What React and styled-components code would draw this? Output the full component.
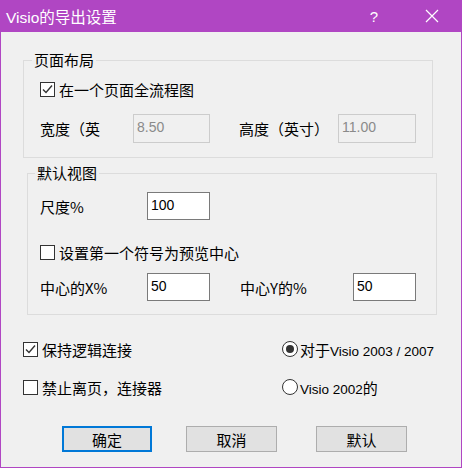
import React from 'react';
import styled, { createGlobalStyle } from 'styled-components';

const accent = '#b046c3';
const face = '#f0f0f0';

const GlobalStyle = createGlobalStyle`
  body {
    margin: 0;
    background: ${face};
    font-family: "Liberation Sans", "Noto Sans CJK SC", sans-serif;
  }
`;

const Dialog = styled.div`
  width: 462px;
  height: 468px;
  box-sizing: border-box;
  background: ${face};
  border: 1px solid ${accent};
  border-top: none;
  display: flex;
  flex-direction: column;
  color: #000;
  font-size: 15px;
`;

const TitleBar = styled.div`
  height: 32px;
  margin: 0 -1px;
  background: ${accent};
  color: #fff;
  display: flex;
  align-items: center;
  padding-left: 6px;
  font-size: 15.5px;
`;

const Title = styled.div`
  flex: 1;
`;

const TitleButton = styled.div`
  width: ${(p) => p.$w}px;
  display: flex;
  justify-content: center;
  align-items: center;
  font-size: 15px;
`;

const Group = styled.div`
  margin: ${(p) => p.$mt}px 0 0 ${(p) => p.$ml}px;
  width: 410px;
  box-sizing: border-box;
  border: 1px solid #dcdcdc;
  padding: 0 0 ${(p) => p.$pb}px ${(p) => p.$pl}px;
  display: flex;
  flex-direction: column;
`;

const Legend = styled.div`
  margin: -10px 0 0 ${(p) => p.$ml - p.$pl}px;
  padding: 0 2px;
  width: fit-content;
  background: ${face};
  line-height: 18px;
  font-family: "Noto Sans CJK SC", sans-serif;
`;

const Row = styled.div`
  display: flex;
  align-items: center;
  margin-top: ${(p) => p.$mt}px;
`;

const Label = styled.div`
  width: ${(p) => p.$w}px;
  margin-left: ${(p) => p.$ml || 0}px;
  font-family: "Noto Sans CJK SC", sans-serif;
  font-size: 15px;
`;

const Input = styled.div`
  width: ${(p) => p.$w}px;
  height: ${(p) => p.$h}px;
  box-sizing: border-box;
  border: 1px solid ${(p) => (p.$disabled ? '#cccccc' : '#7a7a7a')};
  background: ${(p) => (p.$disabled ? face : '#fff')};
  color: ${(p) => (p.$disabled ? '#8a8a8a' : '#000')};
  font-family: "Liberation Sans", sans-serif;
  font-size: 14px;
  padding: 4px 0 0 3px;
`;

const Check = styled.label`
  display: flex;
  align-items: center;
  height: 20px;
  gap: ${(p) => p.$gap}px;
  font-family: "Noto Sans CJK SC", sans-serif;
  font-size: 15px;
`;

const Box = styled.span`
  width: 15px;
  height: 15px;
  box-sizing: border-box;
  border: 1px solid #333;
  background: #fff;
  display: flex;
  align-items: center;
  justify-content: center;
`;

const Radio = styled.span`
  width: 16px;
  height: 16px;
  box-sizing: border-box;
  border: 1px solid #333;
  border-radius: 50%;
  background: #fff;
  display: flex;
  align-items: center;
  justify-content: center;
  &::after {
    content: '';
    width: 8px;
    height: 8px;
    border-radius: 50%;
    background: #333;
    display: ${(p) => (p.$on ? 'block' : 'none')};
  }
`;

const Lat = styled.span`
  font-family: "Liberation Sans", sans-serif;
  font-size: 13.5px;
`;

const Options = styled.div`
  display: grid;
  grid-template-columns: 259px auto;
  row-gap: 18px;
  margin: 24px 0 0 22px;
`;

const Buttons = styled.div`
  display: flex;
  margin: 29px 0 0 61px;
`;

const Button = styled.button`
  width: ${(p) => p.$w}px;
  height: 26px;
  margin-left: ${(p) => p.$ml || 0}px;
  box-sizing: border-box;
  background: #e1e1e1;
  border: ${(p) => (p.$primary ? '2px solid #0078d7' : '1px solid #adadad')};
  font-family: "Noto Sans CJK SC", sans-serif;
  font-size: 15px;
  color: #000;
  padding: 0;
`;

const Tick = () => (
  <svg width="11" height="11" viewBox="0 0 11 11">
    <path d="M1 5.5 L4 8.5 L10 1.5" fill="none" stroke="#333" strokeWidth="1.4" />
  </svg>
);

const CheckBox = ({ checked, children }) => (
  <Check $gap={4}>
    <Box>{checked && <Tick />}</Box>
    <span>{children}</span>
  </Check>
);

const RadioItem = ({ on, children }) => (
  <Check $gap={2}>
    <Radio $on={on} />
    <span>{children}</span>
  </Check>
);

export default function App() {
  return (
    <>
      <GlobalStyle />
      <Dialog>
        <TitleBar>
          <Title>Visio的导出设置</Title>
          <TitleButton $w={56}>?</TitleButton>
          <TitleButton $w={60}>
            <svg width="14" height="14" viewBox="0 0 14 14">
              <path d="M1 1 L13 13 M13 1 L1 13" stroke="#fff" strokeWidth="1.2" />
            </svg>
          </TitleButton>
        </TitleBar>

        <Group $mt={28} $ml={22} $pl={16} $pb={14}>
          <Legend $ml={8} $pl={16}>页面布局</Legend>
          <Row $mt={10}>
            <CheckBox checked>在一个页面全流程图</CheckBox>
          </Row>
          <Row $mt={15}>
            <Label $w={93}>宽度（英</Label>
            <Input $w={77} $h={29} $disabled>8.50</Input>
            <Label $w={99} $ml={29}>高度（英寸）</Label>
            <Input $w={78} $h={29} $disabled>11.00</Input>
          </Row>
        </Group>

        <Group $mt={15} $ml={26} $pl={12} $pb={13}>
          <Legend $ml={7} $pl={12}>默认视图</Legend>
          <Row $mt={10}>
            <Label $w={107}>尺度%</Label>
            <Input $w={63} $h={28}>100</Input>
          </Row>
          <Row $mt={22}>
            <CheckBox>设置第一个符号为预览中心</CheckBox>
          </Row>
          <Row $mt={11}>
            <Label $w={107}>中心的X%</Label>
            <Input $w={63} $h={28}>50</Input>
            <Label $w={113} $ml={30}>中心Y的%</Label>
            <Input $w={63} $h={28}>50</Input>
          </Row>
        </Group>

        <Options>
          <CheckBox checked>保持逻辑连接</CheckBox>
          <RadioItem on>
            对于<Lat>Visio 2003 / 2007</Lat>
          </RadioItem>
          <CheckBox>禁止离页，连接器</CheckBox>
          <RadioItem>
            <Lat>Visio 2002</Lat>的
          </RadioItem>
        </Options>

        <Buttons>
          <Button $w={90} $primary>确定</Button>
          <Button $w={91} $ml={34}>取消</Button>
          <Button $w={91} $ml={39}>默认</Button>
        </Buttons>
      </Dialog>
    </>
  );
}
